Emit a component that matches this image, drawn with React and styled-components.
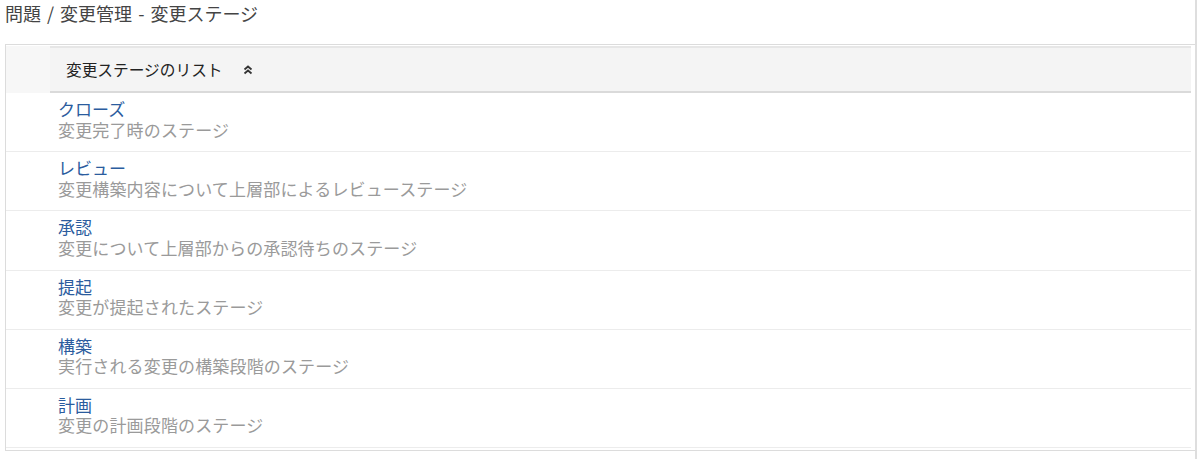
import React from "react";
import styled, { createGlobalStyle } from "styled-components";

const GlobalStyle = createGlobalStyle`
  html, body {
    margin: 0;
    padding: 0;
    background: #fff;
  }
  body {
    font-family: "Noto Sans CJK JP", "Liberation Sans", sans-serif;
  }
`;

const Page = styled.div`
  width: 1195px;
  height: 459px;
  border-right: 2px solid #dedede;
  box-sizing: content-box;
  overflow: hidden;
`;

const PageTitle = styled.h1`
  margin: 0;
  padding: 1px 0 0 5px;
  height: 44px;
  box-sizing: border-box;
  font-size: 18px;
  font-weight: normal;
  line-height: 24px;
  word-spacing: 2px;
  color: #444;
`;

const Panel = styled.div`
  margin-left: 5px;
  border: 1px solid #dcdcdc;
  border-right: none;
  padding: 1px 4px 2px 0;
`;

const HeaderRow = styled.div`
  display: grid;
  grid-template-columns: 44px 1fr;
  height: 47px;
`;

const Gutter = styled.div`
  background: #f7f7f7;
`;

const HeaderCell = styled.div`
  display: flex;
  align-items: center;
  gap: 20px;
  padding-left: 16px;
  background: #f4f4f4;
  border-top: 2px solid #e6e6e6;
  border-bottom: 2px solid #dadada;
  font-size: 15.7px;
  color: #222;
`;

const Row = styled.div`
  display: grid;
  grid-template-columns: 44px 1fr;
  height: 59.2px;
  border-bottom: 1px solid #ececec;
  box-sizing: border-box;
`;

const RowBody = styled.div`
  display: flex;
  flex-direction: column;
  padding: 6px 0 0 8px;
  font-size: 17px;
  line-height: 20.5px;
`;

const StageName = styled.a`
  color: #2b5c9e;
  text-decoration: none;
`;

const StageDesc = styled.span`
  color: #9a9a9a;
  letter-spacing: 0.15px;
`;

const SortIcon = () => (
  <svg width="10" height="10" viewBox="0 0 10 10">
    <path d="M1.5 4.5 L5 1.5 L8.5 4.5" fill="none" stroke="#333" strokeWidth="1.8" />
    <path d="M1.5 8.5 L5 5.5 L8.5 8.5" fill="none" stroke="#333" strokeWidth="1.8" />
  </svg>
);

const stages = [
  { name: "クローズ", desc: "変更完了時のステージ" },
  { name: "レビュー", desc: "変更構築内容について上層部によるレビューステージ" },
  { name: "承認", desc: "変更について上層部からの承認待ちのステージ" },
  { name: "提起", desc: "変更が提起されたステージ" },
  { name: "構築", desc: "実行される変更の構築段階のステージ" },
  { name: "計画", desc: "変更の計画段階のステージ" },
];

export default function App() {
  return (
    <Page>
      <GlobalStyle />
      <PageTitle>問題 / 変更管理 - 変更ステージ</PageTitle>
      <Panel>
        <HeaderRow>
          <Gutter />
          <HeaderCell>
            変更ステージのリスト
            <SortIcon />
          </HeaderCell>
        </HeaderRow>
        {stages.map((s) => (
          <Row key={s.name}>
            <div />
            <RowBody>
              <StageName href="#">{s.name}</StageName>
              <StageDesc>{s.desc}</StageDesc>
            </RowBody>
          </Row>
        ))}
      </Panel>
    </Page>
  );
}
